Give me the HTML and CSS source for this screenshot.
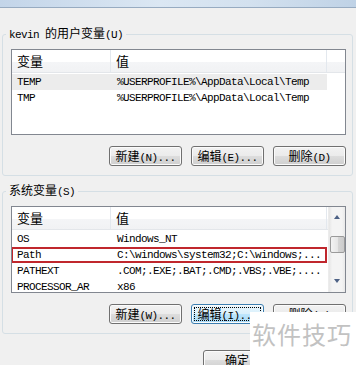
FILE: index.html
```html
<!DOCTYPE html>
<html lang="zh-CN">
<head>
    <meta charset="UTF-8">
    <title>环境变量</title>
    <link rel="stylesheet" href="styles.css">
</head>
<body>
    <div class="titlebar"></div>

    <div class="dialog">
        <!-- 用户变量 -->
        <fieldset class="group">
            <legend><span class="m">kevin </span>的用户变量<span class="m">(U)</span></legend>
            <div class="list">
                <div class="list-head">
                    <div class="col-name">变量</div>
                    <div class="col-value">值</div>
                    <div class="col-rest"></div>
                </div>
                <div class="list-body">
                    <div class="row hover"><span class="col-name">TEMP</span><span class="col-value">%USERPROFILE%\AppData\Local\Temp</span></div>
                    <div class="row"><span class="col-name">TMP</span><span class="col-value">%USERPROFILE%\AppData\Local\Temp</span></div>
                </div>
            </div>
            <div class="buttons">
                <button>新建<span class="m">(N)...</span></button>
                <button>编辑<span class="m">(E)...</span></button>
                <button>删除<span class="m">(D)</span></button>
            </div>
        </fieldset>

        <!-- 系统变量 -->
        <fieldset class="group second">
            <legend>系统变量<span class="m">(S)</span></legend>
            <div class="list scroll">
                <div class="list-main">
                    <div class="list-head">
                        <div class="col-name">变量</div>
                        <div class="col-value">值</div>
                        <div class="col-rest"></div>
                    </div>
                    <div class="list-body">
                        <div class="row"><span class="col-name">OS</span><span class="col-value">Windows_NT</span></div>
                        <div class="row marked"><span class="col-name">Path</span><span class="col-value">C:\windows\system32;C:\windows;...</span></div>
                        <div class="row"><span class="col-name">PATHEXT</span><span class="col-value">.COM;.EXE;.BAT;.CMD;.VBS;.VBE;....</span></div>
                        <div class="row"><span class="col-name">PROCESSOR_AR</span><span class="col-value">x86</span></div>
                    </div>
                </div>
                <div class="scrollbar">
                    <div class="arrow up"></div>
                    <div class="thumb"></div>
                    <div class="arrow down"></div>
                </div>
            </div>
            <div class="buttons">
                <button>新建<span class="m">(W)...</span></button>
                <button class="focused">编辑<span class="m">(I)...</span></button>
                <button>删除<span class="m">(L)</span></button>
            </div>
        </fieldset>

        <div class="footer">
            <button class="ok">确定</button>
        </div>
    </div>

    <div class="watermark">软件技巧</div>
</body>
</html>
```

FILE: styles.css
```css
* {
    box-sizing: border-box;
}
body {
    margin: 0;
    width: 356px;
    height: 365px;
    overflow: hidden;
    position: relative;
    background: #f0f0f0;
    font-family: "Noto Sans CJK SC", "Liberation Sans", sans-serif;
    font-size: 12px;
    color: #000;
}
.m {
    font-family: "Liberation Mono", "Noto Sans CJK SC", monospace;
    font-size: 11px;
    letter-spacing: -0.6px;
}
.titlebar {
    height: 8px;
    background: linear-gradient(90deg, #c3d5e9 0%, #dbe7f3 45%, #d3e1ef 70%, #bfd2e6 100%);
    border-bottom: 1px solid #97abc1;
}
.dialog {
    padding: 0 3px 0 2px;
}
.group {
    margin: 18px 0 0 0;
    padding: 7px 6px 9px 8px;
    border: 1px solid #d5dfe5;
    border-radius: 3px;
    min-width: 0;
}
.group.second {
    margin-top: 7px;
}
.group legend {
    padding: 0 3px;
    margin-left: -5px;
    line-height: 14px;
    font-size: 12px;
}
.list {
    height: 86px;
    border: 1px solid #828790;
    background: #fff;
    overflow: hidden;
}
.list.scroll {
    height: 87px;
    display: flex;
}
.list-main {
    flex: 1;
    min-width: 0;
}
.list-head {
    display: flex;
    height: 23px;
    line-height: 22px;
    font-size: 13px;
    border-bottom: 1px solid #e3e6ea;
    background: linear-gradient(#fff 0%, #fff 55%, #f4f5f7 55%, #f1f2f4 100%);
}
.list-head .col-name {
    width: 99px;
    padding-left: 5px;
    border-right: 1px solid #e3e8ee;
}
.list-head .col-value {
    width: 216px;
    padding-left: 5px;
    border-right: 1px solid #e3e8ee;
}
.list-head .col-rest {
    flex: 1;
}
.list-body {
    padding-top: 1px;
}
.row {
    display: flex;
    width: 315px;
    height: 16px;
    line-height: 16px;
    position: relative;
    font-family: "Liberation Mono", monospace;
    font-size: 11px;
    letter-spacing: -0.6px;
    white-space: nowrap;
}
.row.hover {
    background: #ececec;
}
.row.marked::after {
    content: "";
    position: absolute;
    left: -1px;
    right: 0;
    top: 0;
    bottom: 0;
    border: 2px solid #c0272d;
}
.row .col-name {
    width: 99px;
    padding-left: 5px;
}
.row .col-value {
    padding-left: 6px;
}
.scrollbar {
    width: 17px;
    display: flex;
    flex-direction: column;
    align-items: center;
    background: linear-gradient(90deg, #e6e6e6 0%, #f4f4f4 20%, #f4f4f4 80%, #e9e9e9 100%);
    border-left: 1px solid #ececec;
}
.arrow {
    width: 0;
    height: 0;
    border-left: 3.5px solid transparent;
    border-right: 3.5px solid transparent;
}
.arrow.up {
    margin-top: 8px;
    border-bottom: 4px solid #4d6185;
}
.arrow.down {
    margin-top: auto;
    margin-bottom: 9px;
    border-top: 4px solid #4d6185;
}
.thumb {
    width: 15px;
    height: 17px;
    margin-top: 17px;
    border: 1px solid #9a9a9a;
    border-radius: 2px;
    background: linear-gradient(90deg, #f3f3f3 0%, #e6e6e6 50%, #d6d6d6 50%, #cbcbcb 100%);
}
.buttons {
    display: flex;
    justify-content: flex-end;
    gap: 9px;
    margin-top: 11px;
}
button {
    width: 73px;
    height: 20px;
    padding: 0;
    font-family: "Noto Sans CJK SC", "Liberation Sans", sans-serif;
    font-size: 12px;
    line-height: 18px;
    color: #000;
    border: 1px solid #707070;
    border-radius: 3px;
    background: linear-gradient(#f2f2f2 0%, #ebebeb 50%, #dddddd 50%, #cfcfcf 100%);
    box-shadow: inset 0 0 0 1px #fbfbfb;
}
button.focused {
    border-color: #3c7fb1;
    background: linear-gradient(#eaf6fd 0%, #d9f0fc 50%, #bee6fd 50%, #a7d9f5 100%);
    outline: 1px dotted #000;
    outline-offset: -4px;
}
.footer {
    margin: 16px 0 0 201px;
}
button.ok {
    width: 68px;
}
.watermark {
    position: absolute;
    left: 250px;
    top: 312px;
    width: 106px;
    height: 53px;
    padding: 6px 0 0 2px;
    background: #fff;
    color: #c2c2c2;
    font-size: 24px;
    line-height: 32px;
    letter-spacing: 1px;
    white-space: nowrap;
}
```
